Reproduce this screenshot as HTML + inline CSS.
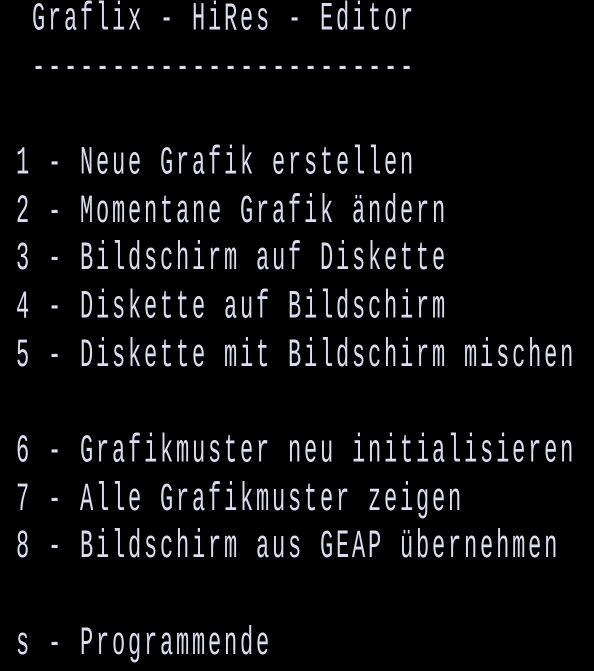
<!DOCTYPE html>
<html><head><meta charset="utf-8"><style>
html,body{margin:0;padding:0;background:#000;width:594px;height:671px;overflow:hidden}
pre{position:absolute;left:16px;top:-3px;margin:0;font-family:"Liberation Mono",monospace;font-size:22px;line-height:26.667px;color:#dcdcf0;transform:scaleY(1.8);transform-origin:0 0;letter-spacing:2.8px}
</style></head><body>
<pre> Graflix - HiRes - Editor
 ------------------------

1 - Neue Grafik erstellen
2 - Momentane Grafik ändern
3 - Bildschirm auf Diskette
4 - Diskette auf Bildschirm
5 - Diskette mit Bildschirm mischen

6 - Grafikmuster neu initialisieren
7 - Alle Grafikmuster zeigen
8 - Bildschirm aus GEAP übernehmen

s - Programmende</pre>
</body></html>
